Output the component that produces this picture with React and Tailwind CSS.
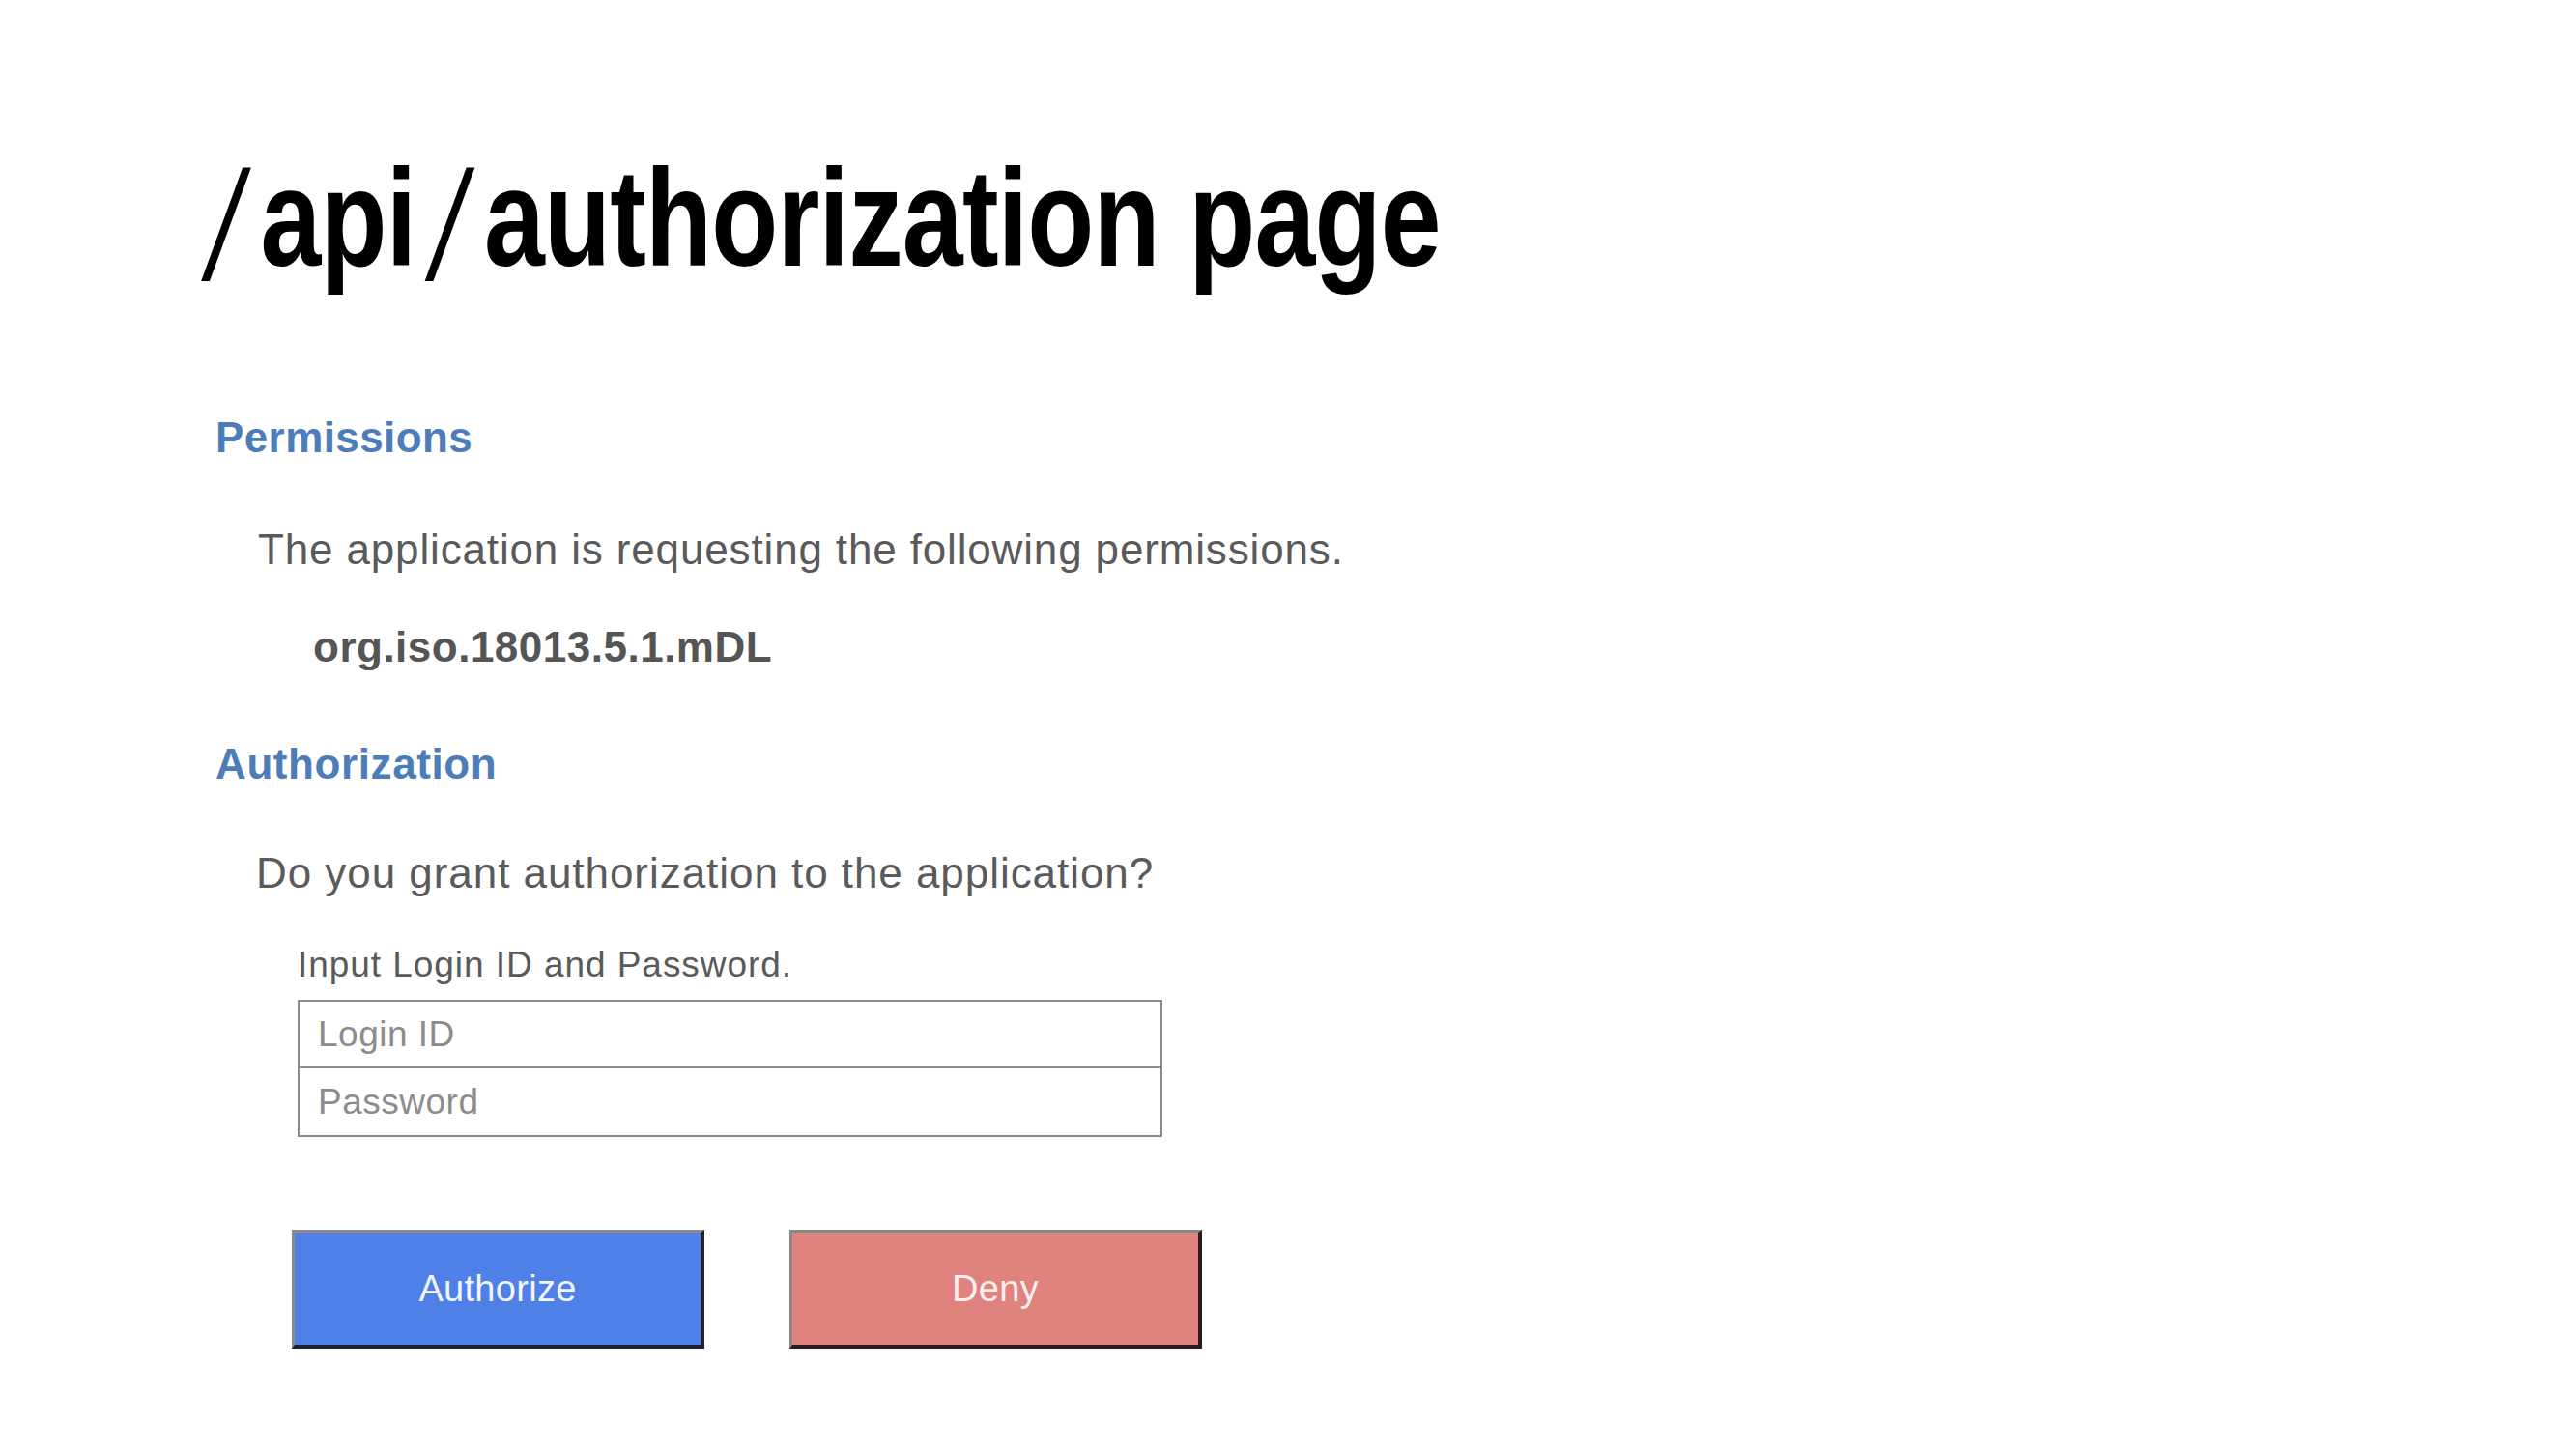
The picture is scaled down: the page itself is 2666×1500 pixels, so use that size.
export default function App() {
  const sans = { fontFamily: '"Liberation Sans", Arial, sans-serif' };
  const slash = { fontFamily: '"DejaVu Sans", sans-serif' };
  return (
    <div className="w-[2666px] h-[1500px] bg-white overflow-hidden" style={sans}>
      <div className="pl-[207px] pt-[154px]">
        <h1 className="inline-block origin-left scale-x-[0.79] text-[143px] leading-[143px] font-bold text-black whitespace-nowrap tracking-[-1px]">
          <span
            className="inline-block font-extralight scale-x-[1.5] translate-y-[3px] ml-[10px] mr-[22px]"
            style={slash}
          >
            /
          </span>
          api
          <span
            className="inline-block font-extralight scale-x-[1.5] translate-y-[3px] ml-[20px] mr-[22px]"
            style={slash}
          >
            /
          </span>
          authorization page
        </h1>
      </div>

      <div className="pl-[223px] mt-[134px]">
        <h2 className="text-[44px] leading-[44px] font-bold text-[#4d7db8] tracking-[0.4px]">Permissions</h2>
        <p className="mt-[72px] ml-[44px] text-[44px] leading-[43px] text-[#5a5a5a] tracking-[0.85px]">
          The application is requesting the following permissions.
        </p>
        <p className="mt-[58px] ml-[101px] text-[44px] leading-[44px] font-bold text-[#555555] tracking-[0.5px]">
          org.iso.18013.5.1.mDL
        </p>

        <h2 className="mt-[77px] text-[44px] leading-[44px] font-bold text-[#4d7db8] tracking-[0.6px]">
          Authorization
        </h2>
        <p className="mt-[69px] ml-[42px] text-[44px] leading-[43px] text-[#5a5a5a] tracking-[0.95px]">
          Do you grant authorization to the application?
        </p>

        <div className="ml-[85px]">
          <p className="mt-[56px] text-[37px] leading-[36px] text-[#5a5a5a] tracking-[0.95px]">
            Input Login ID and Password.
          </p>
          <div className="mt-[18px] w-[895px] border-2 border-[#8a8a8a] flex flex-col">
            <div className="h-[69px] border-b-2 border-[#8a8a8a] flex items-center pl-[19px] text-[37px] text-[#8c8c8c] tracking-[0.5px]">
              Login ID
            </div>
            <div className="h-[69px] flex items-center pl-[19px] text-[37px] text-[#8c8c8c] tracking-[0.5px]">
              Password
            </div>
          </div>
        </div>

        <div className="mt-[96px] ml-[79px] flex gap-[88px]">
          <button className="w-[427px] h-[123px] bg-[#4f80e8] border-t-[3px] border-l-[3px] border-r-4 border-b-4 border-t-[#8a8a8a] border-l-[#8a8a8a] border-r-[#1c2230] border-b-[#1c2230] text-[38px] text-[#f2f5ff] tracking-[0.3px] flex items-center justify-center">
            Authorize
          </button>
          <button className="w-[427px] h-[123px] bg-[#e0837f] border-t-[3px] border-l-[3px] border-r-4 border-b-4 border-t-[#8a8a8a] border-l-[#8a8a8a] border-r-[#2a1c1c] border-b-[#2a1c1c] text-[38px] text-[#fbeeee] tracking-[0.3px] flex items-center justify-center">
            Deny
          </button>
        </div>
      </div>
    </div>
  );
}
